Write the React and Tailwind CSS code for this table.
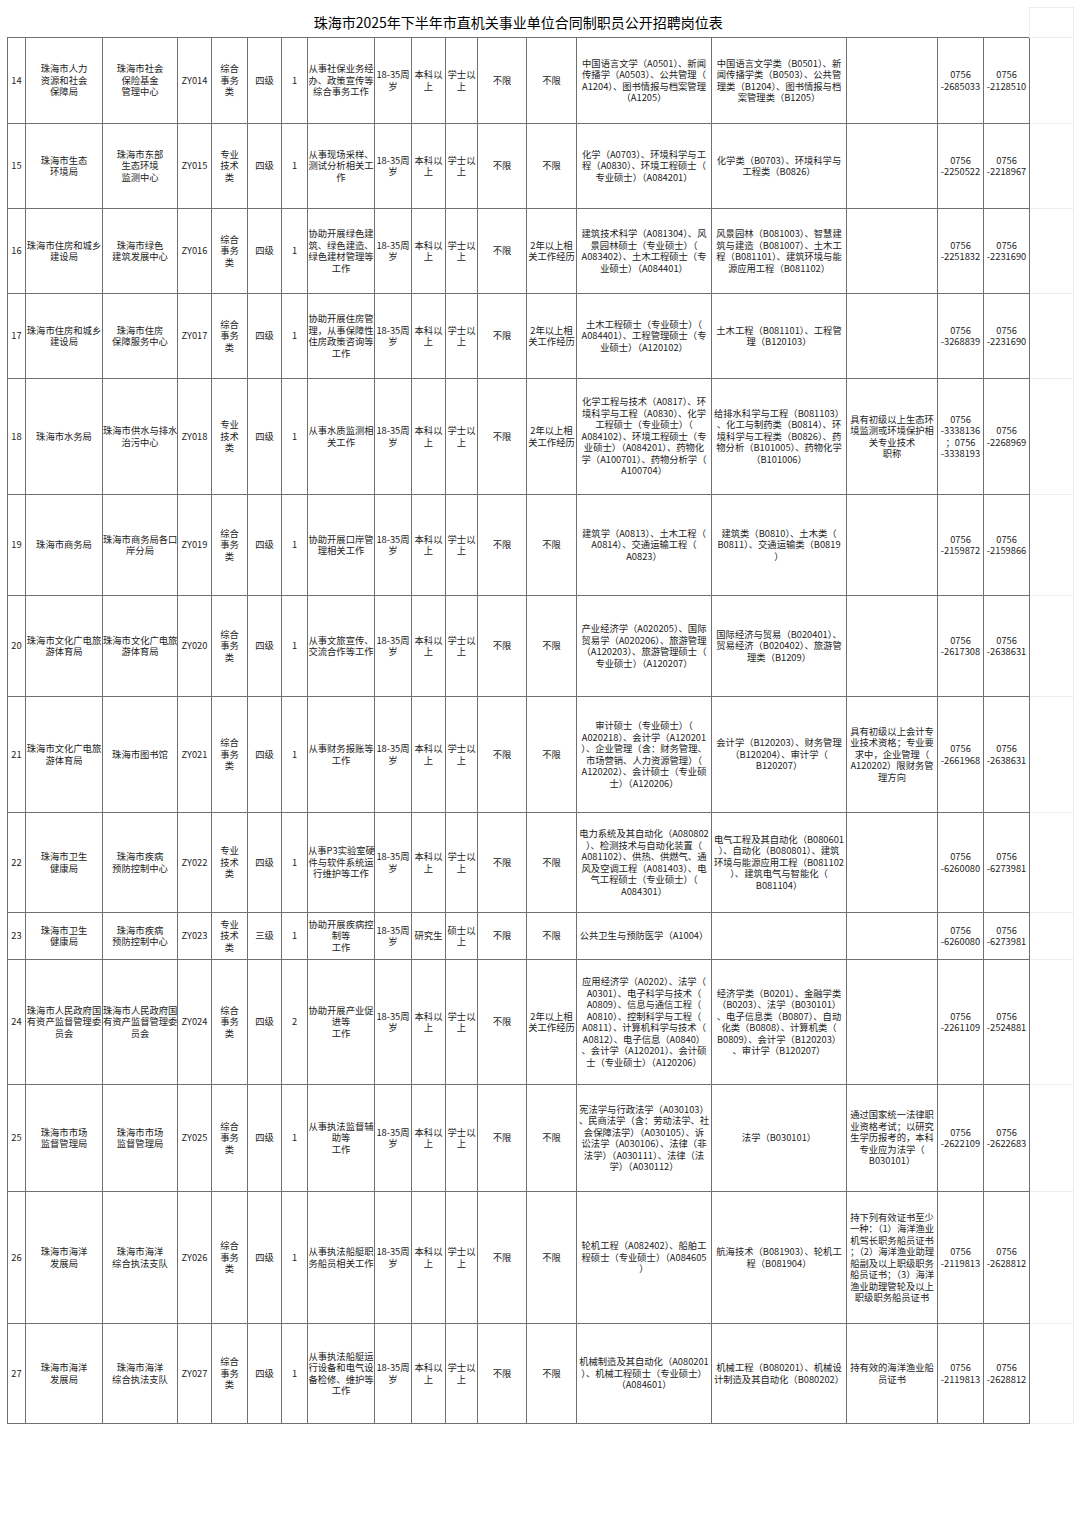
import React from 'react';

const zh = ['综合', '事务', '类'];
const zy = ['专业', '技术', '类'];
const age = ['18-35周', '岁'];
const bk = ['本科以', '上'];
const xs = ['学士以', '上'];
const bx = ['不限'];
const exp2 = ['2年以上相', '关工作经历'];

const rows = [
  {
    n: '14', h: 'h-[86px]',
    dept: ['珠海市人力', '资源和社会', '保障局'],
    unit: ['珠海市社会', '保险基金', '管理中心'],
    code: 'ZY014', type: zh, level: '四级', num: '1',
    duty: ['从事社保业务经', '办、政策宣传等', '综合事务工作'],
    edu: bk, deg: xs, exp: bx,
    grad: ['中国语言文学（A0501）、新闻', '传播学（A0503）、公共管理（', 'A1204）、图书情报与档案管理', '（A1205）'],
    ug: ['中国语言文学类（B0501）、新', '闻传播学类（B0503）、公共管', '理类（B1204）、图书情报与档', '案管理类（B1205）'],
    other: [],
    tel1: ['0756', '-2685033'], tel2: ['0756', '-2128510'],
  },
  {
    n: '15', h: 'h-[85px]',
    dept: ['珠海市生态', '环境局'],
    unit: ['珠海市东部', '生态环境', '监测中心'],
    code: 'ZY015', type: zy, level: '四级', num: '1',
    duty: ['从事现场采样、', '测试分析相关工', '作'],
    edu: bk, deg: xs, exp: bx,
    grad: ['化学（A0703）、环境科学与工', '程（A0830）、环境工程硕士（', '专业硕士）（A084201）'],
    ug: ['化学类（B0703）、环境科学与', '工程类（B0826）'],
    other: [],
    tel1: ['0756', '-2250522'], tel2: ['0756', '-2218967'],
  },
  {
    n: '16', h: 'h-[85px]',
    dept: ['珠海市住房和城乡', '建设局'],
    unit: ['珠海市绿色', '建筑发展中心'],
    code: 'ZY016', type: zh, level: '四级', num: '1',
    duty: ['协助开展绿色建', '筑、绿色建造、', '绿色建材管理等', '工作'],
    edu: bk, deg: xs, exp: exp2,
    grad: ['建筑技术科学（A081304）、风', '景园林硕士（专业硕士）（', 'A083402）、土木工程硕士（专', '业硕士）（A084401）'],
    ug: ['风景园林（B081003）、智慧建', '筑与建造（B081007）、土木工', '程（B081101）、建筑环境与能', '源应用工程（B081102）'],
    other: [],
    tel1: ['0756', '-2251832'], tel2: ['0756', '-2231690'],
  },
  {
    n: '17', h: 'h-[85px]',
    dept: ['珠海市住房和城乡', '建设局'],
    unit: ['珠海市住房', '保障服务中心'],
    code: 'ZY017', type: zh, level: '四级', num: '1',
    duty: ['协助开展住房管', '理，从事保障性', '住房政策咨询等', '工作'],
    edu: bk, deg: xs, exp: exp2,
    grad: ['土木工程硕士（专业硕士）（', 'A084401）、工程管理硕士（专', '业硕士）（A120102）'],
    ug: ['土木工程（B081101）、工程管', '理（B120103）'],
    other: [],
    tel1: ['0756', '-3268839'], tel2: ['0756', '-2231690'],
  },
  {
    n: '18', h: 'h-[116px]',
    dept: ['珠海市水务局'],
    unit: ['珠海市供水与排水', '治污中心'],
    code: 'ZY018', type: zy, level: '四级', num: '1',
    duty: ['从事水质监测相', '关工作'],
    edu: bk, deg: xs, exp: exp2,
    grad: ['化学工程与技术（A0817）、环', '境科学与工程（A0830）、化学', '工程硕士（专业硕士）（', 'A084102）、环境工程硕士（专', '业硕士）（A084201）、药物化', '学（A100701）、药物分析学（', 'A100704）'],
    ug: ['给排水科学与工程（B081103）', '、化工与制药类（B0814）、环', '境科学与工程类（B0826）、药', '物分析（B101005）、药物化学', '（B101006）'],
    other: ['具有初级以上生态环', '境监测或环境保护相', '关专业技术', '职称'],
    tel1: ['0756', '-3338136', '；0756', '-3338193'], tel2: ['0756', '-2268969'],
  },
  {
    n: '19', h: 'h-[101px]',
    dept: ['珠海市商务局'],
    unit: ['珠海市商务局各口', '岸分局'],
    code: 'ZY019', type: zh, level: '四级', num: '1',
    duty: ['协助开展口岸管', '理相关工作'],
    edu: bk, deg: xs, exp: bx,
    grad: ['建筑学（A0813）、土木工程（', 'A0814）、交通运输工程（', 'A0823）'],
    ug: ['建筑类（B0810）、土木类（', 'B0811）、交通运输类（B0819', '）'],
    other: [],
    tel1: ['0756', '-2159872'], tel2: ['0756', '-2159866'],
  },
  {
    n: '20', h: 'h-[101px]',
    dept: ['珠海市文化广电旅', '游体育局'],
    unit: ['珠海市文化广电旅', '游体育局'],
    code: 'ZY020', type: zh, level: '四级', num: '1',
    duty: ['从事文旅宣传、', '交流合作等工作'],
    edu: bk, deg: xs, exp: bx,
    grad: ['产业经济学（A020205）、国际', '贸易学（A020206）、旅游管理', '（A120203）、旅游管理硕士（', '专业硕士）（A120207）'],
    ug: ['国际经济与贸易（B020401）、', '贸易经济（B020402）、旅游管', '理类（B1209）'],
    other: [],
    tel1: ['0756', '-2617308'], tel2: ['0756', '-2638631'],
  },
  {
    n: '21', h: 'h-[116px]',
    dept: ['珠海市文化广电旅', '游体育局'],
    unit: ['珠海市图书馆'],
    code: 'ZY021', type: zh, level: '四级', num: '1',
    duty: ['从事财务报账等', '工作'],
    edu: bk, deg: xs, exp: bx,
    grad: ['审计硕士（专业硕士）（', 'A020218）、会计学（A120201', '）、企业管理（含：财务管理、', '市场营销、人力资源管理）（', 'A120202）、会计硕士（专业硕', '士）（A120206）'],
    ug: ['会计学（B120203）、财务管理', '（B120204）、审计学（', 'B120207）'],
    other: ['具有初级以上会计专', '业技术资格；专业要', '求中，企业管理（', 'A120202）限财务管', '理方向'],
    tel1: ['0756', '-2661968'], tel2: ['0756', '-2638631'],
  },
  {
    n: '22', h: 'h-[100px]',
    dept: ['珠海市卫生', '健康局'],
    unit: ['珠海市疾病', '预防控制中心'],
    code: 'ZY022', type: zy, level: '四级', num: '1',
    duty: ['从事P3实验室硬', '件与软件系统运', '行维护等工作'],
    edu: bk, deg: xs, exp: bx,
    grad: ['电力系统及其自动化（A080802', '）、检测技术与自动化装置（', 'A081102）、供热、供燃气、通', '风及空调工程（A081403）、电', '气工程硕士（专业硕士）（', 'A084301）'],
    ug: ['电气工程及其自动化（B080601', '）、自动化（B080801）、建筑', '环境与能源应用工程（B081102', '）、建筑电气与智能化（', 'B081104）'],
    other: [],
    tel1: ['0756', '-6260080'], tel2: ['0756', '-6273981'],
  },
  {
    n: '23', h: 'h-[47px]',
    dept: ['珠海市卫生', '健康局'],
    unit: ['珠海市疾病', '预防控制中心'],
    code: 'ZY023', type: zy, level: '三级', num: '1',
    duty: ['协助开展疾病控', '制等', '工作'],
    edu: ['研究生'], deg: ['硕士以', '上'], exp: bx,
    grad: ['公共卫生与预防医学（A1004）'],
    ug: [],
    other: [],
    tel1: ['0756', '-6260080'], tel2: ['0756', '-6273981'],
  },
  {
    n: '24', h: 'h-[125px]',
    dept: ['珠海市人民政府国', '有资产监督管理委', '员会'],
    unit: ['珠海市人民政府国', '有资产监督管理委', '员会'],
    code: 'ZY024', type: zh, level: '四级', num: '2',
    duty: ['协助开展产业促', '进等', '工作'],
    edu: bk, deg: xs, exp: exp2,
    grad: ['应用经济学（A0202）、法学（', 'A0301）、电子科学与技术（', 'A0809）、信息与通信工程（', 'A0810）、控制科学与工程（', 'A0811）、计算机科学与技术（', 'A0812）、电子信息（A0840）', '、会计学（A120201）、会计硕', '士（专业硕士）（A120206）'],
    ug: ['经济学类（B0201）、金融学类', '（B0203）、法学（B030101）', '、电子信息类（B0807）、自动', '化类（B0808）、计算机类（', 'B0809）、会计学（B120203）', '、审计学（B120207）'],
    other: [],
    tel1: ['0756', '-2261109'], tel2: ['0756', '-2524881'],
  },
  {
    n: '25', h: 'h-[107px]',
    dept: ['珠海市市场', '监督管理局'],
    unit: ['珠海市市场', '监督管理局'],
    code: 'ZY025', type: zh, level: '四级', num: '1',
    duty: ['从事执法监督辅', '助等', '工作'],
    edu: bk, deg: xs, exp: bx,
    grad: ['宪法学与行政法学（A030103）', '、民商法学（含：劳动法学、社', '会保障法学）（A030105）、诉', '讼法学（A030106）、法律（非', '法学）（A030111）、法律（法', '学）（A030112）'],
    ug: ['法学（B030101）'],
    other: ['通过国家统一法律职', '业资格考试；以研究', '生学历报考的，本科', '专业应为法学（', 'B030101）'],
    tel1: ['0756', '-2622109'], tel2: ['0756', '-2622683'],
  },
  {
    n: '26', h: 'h-[132px]',
    dept: ['珠海市海洋', '发展局'],
    unit: ['珠海市海洋', '综合执法支队'],
    code: 'ZY026', type: zh, level: '四级', num: '1',
    duty: ['从事执法船艇职', '务船员相关工作'],
    edu: bk, deg: xs, exp: bx,
    grad: ['轮机工程（A082402）、船舶工', '程硕士（专业硕士）（A084605', '）'],
    ug: ['航海技术（B081903）、轮机工', '程（B081904）'],
    other: ['持下列有效证书至少', '一种：（1）海洋渔业', '机驾长职务船员证书', '；（2）海洋渔业助理', '船副及以上职级职务', '船员证书；（3）海洋', '渔业助理管轮及以上', '职级职务船员证书'],
    tel1: ['0756', '-2119813'], tel2: ['0756', '-2628812'],
  },
  {
    n: '27', h: 'h-[100px]',
    dept: ['珠海市海洋', '发展局'],
    unit: ['珠海市海洋', '综合执法支队'],
    code: 'ZY027', type: zh, level: '四级', num: '1',
    duty: ['从事执法船艇运', '行设备和电气设', '备检修、维护等', '工作'],
    edu: bk, deg: xs, exp: bx,
    grad: ['机械制造及其自动化（A080201', '）、机械工程硕士（专业硕士）', '（A084601）'],
    ug: ['机械工程（B080201）、机械设', '计制造及其自动化（B080202）'],
    other: ['持有效的海洋渔业船', '员证书'],
    tel1: ['0756', '-2119813'], tel2: ['0756', '-2628812'],
  },
];

function Cell({ lines }) {
  const list = Array.isArray(lines) ? lines : [lines];
  return (
    <td className="border border-[#707070] p-0 align-middle text-center">
      {list.map((l, i) => (
        <div key={i} className="whitespace-nowrap">{l}</div>
      ))}
    </td>
  );
}

export default function App() {
  return (
    <div className="w-[1080px] h-[1522px] bg-white pt-[7px] pl-[7px] text-[#222] font-['Noto_Sans_CJK_SC','Noto_Sans',sans-serif]">
      <table className="table-fixed border-collapse w-[1066px] text-[9.3px] leading-[11.5px]">
        <colgroup>
          <col className="w-[18px]" />
          <col className="w-[77px]" />
          <col className="w-[75px]" />
          <col className="w-[34px]" />
          <col className="w-[36px]" />
          <col className="w-[34px]" />
          <col className="w-[26px]" />
          <col className="w-[67px]" />
          <col className="w-[37px]" />
          <col className="w-[34px]" />
          <col className="w-[32px]" />
          <col className="w-[49px]" />
          <col className="w-[50px]" />
          <col className="w-[135px]" />
          <col className="w-[135px]" />
          <col className="w-[91px]" />
          <col className="w-[46px]" />
          <col className="w-[46px]" />
          <col className="w-[44px]" />
        </colgroup>
        <tbody>
          <tr className="h-[30px]">
            <td colSpan={18} className="p-0 text-center align-middle text-[14px] leading-[16px] text-black">
              珠海市2025年下半年市直机关事业单位合同制职员公开招聘岗位表
            </td>
            <td className="p-0 border border-[#ececec]" />
          </tr>
          {rows.map((r) => (
            <tr key={r.n} className={r.h}>
              <Cell lines={r.n} />
              <Cell lines={r.dept} />
              <Cell lines={r.unit} />
              <Cell lines={r.code} />
              <Cell lines={r.type} />
              <Cell lines={r.level} />
              <Cell lines={r.num} />
              <Cell lines={r.duty} />
              <Cell lines={age} />
              <Cell lines={r.edu} />
              <Cell lines={r.deg} />
              <Cell lines={bx} />
              <Cell lines={r.exp} />
              <Cell lines={r.grad} />
              <Cell lines={r.ug} />
              <Cell lines={r.other} />
              <Cell lines={r.tel1} />
              <Cell lines={r.tel2} />
              <td className="p-0 border border-[#ececec] border-l-[#707070]" />
            </tr>
          ))}
        </tbody>
      </table>
    </div>
  );
}
